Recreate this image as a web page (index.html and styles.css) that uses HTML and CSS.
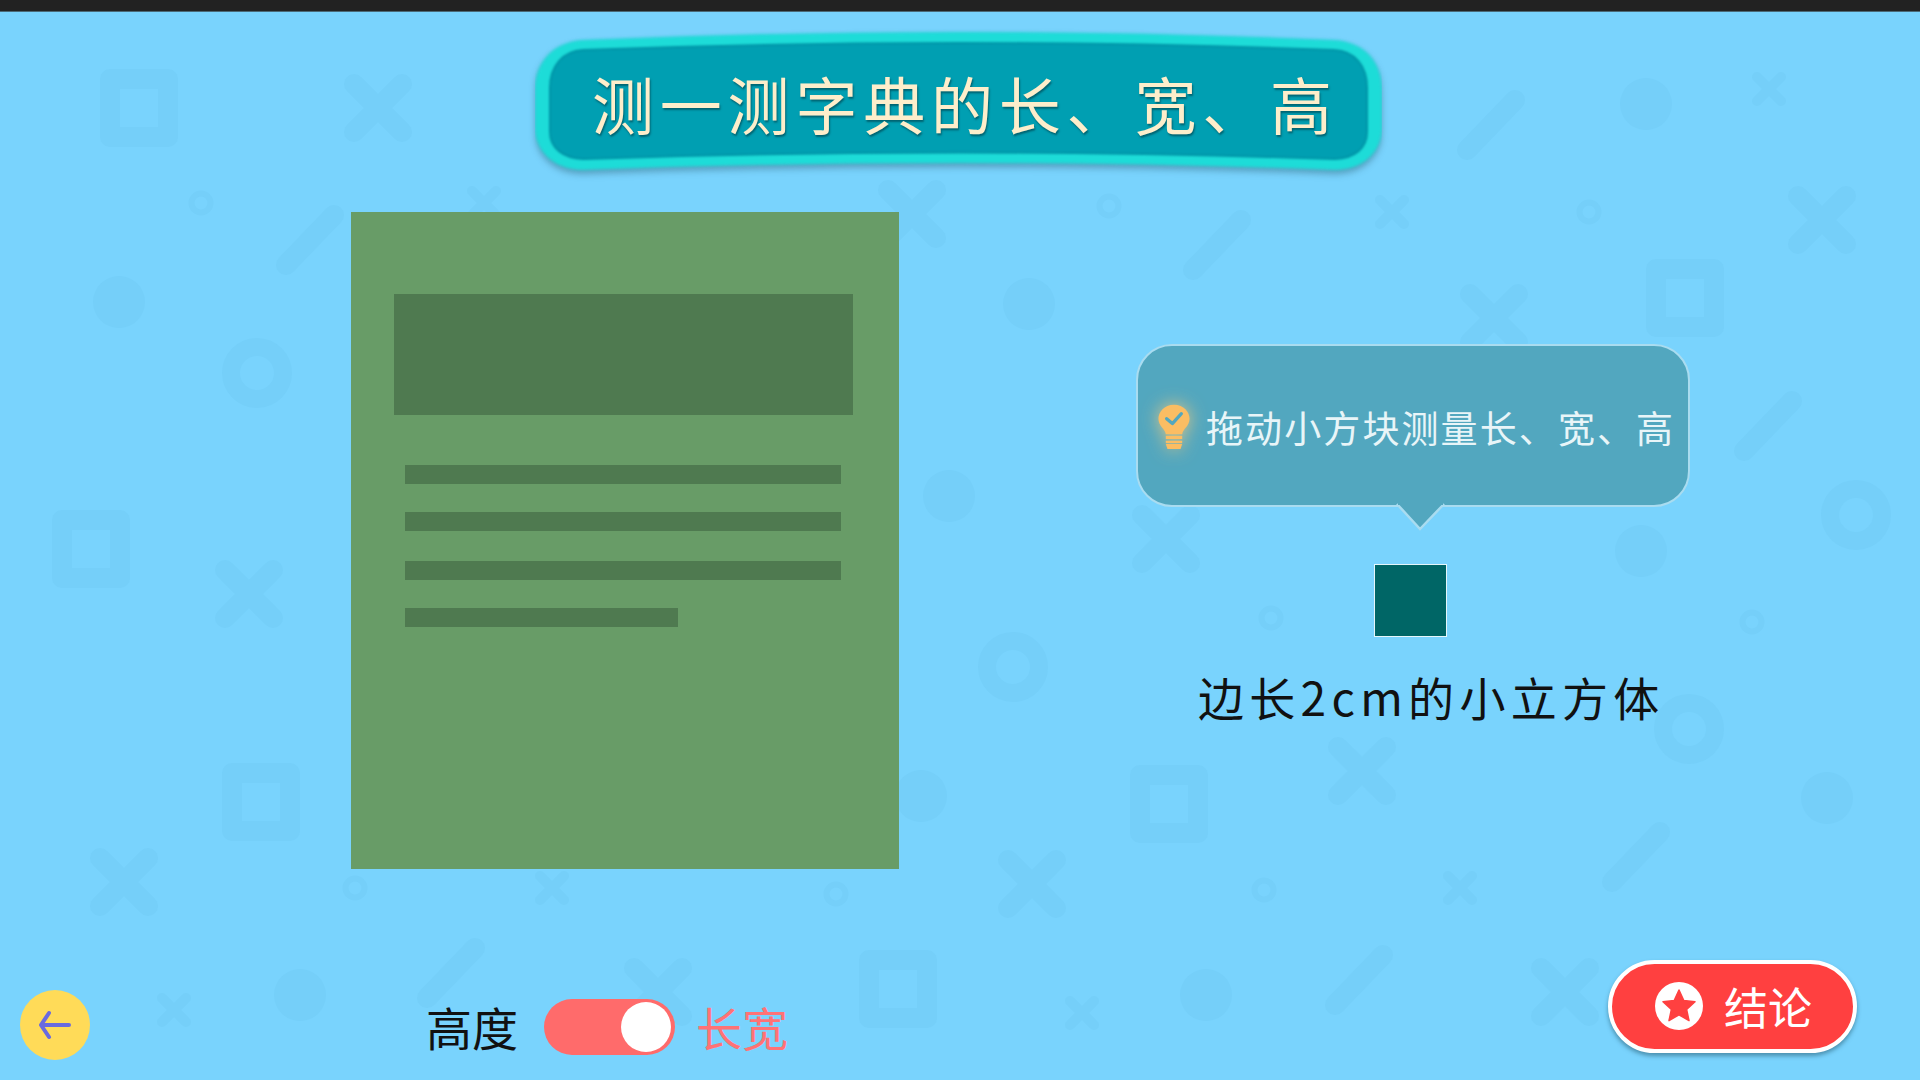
FILE: index.html
```html
<!DOCTYPE html>
<html lang="zh-CN">
<head>
    <meta charset="UTF-8">
    <meta name="viewport" content="width=device-width, initial-scale=1.0">
    <title>测一测字典的长、宽、高</title>
    <link rel="stylesheet" href="styles.css">
</head>
<body>
    <svg class="pattern" width="1920" height="1080" viewBox="0 0 1920 1080" aria-hidden="true">
        <defs>
            <path id="sq" fill-rule="evenodd" d="M-29-39H29A10 10 0 0 1 39-29V29A10 10 0 0 1 29 39H-29A10 10 0 0 1-39 29V-29A10 10 0 0 1-29-39ZM-19-19V19H19V-19Z"/>
            <path id="x" d="M-24-24L24 24M24-24L-24 24" fill="none" stroke-width="20" stroke-linecap="round"/>
            <path id="xs" d="M-12-12L12 12M12-12L-12 12" fill="none" stroke-width="10" stroke-linecap="round"/>
            <path id="sl" d="M24-25L-24 25" fill="none" stroke-width="20" stroke-linecap="round"/>
            <circle id="dot" r="26"/>
            <circle id="rs" r="9.5" fill="none" stroke-width="6"/>
            <circle id="rl" r="26" fill="none" stroke-width="18"/>
        </defs>
        <g class="pattern-shapes">
            <use href="#sq" x="139" y="108"/><use href="#sq" x="1685" y="298"/><use href="#sq" x="91" y="549"/>
            <use href="#sq" x="261" y="802"/><use href="#sq" x="1169" y="804"/><use href="#sq" x="898" y="989"/>
            <use href="#x" x="378" y="108"/><use href="#x" x="1822" y="220"/><use href="#x" x="912" y="214"/>
            <use href="#x" x="1494" y="318"/><use href="#x" x="1166" y="539"/><use href="#x" x="249" y="594"/>
            <use href="#x" x="1362" y="771"/><use href="#x" x="124" y="882"/><use href="#x" x="1032" y="884"/>
            <use href="#x" x="658" y="992"/><use href="#x" x="1565" y="992"/>
            <use href="#xs" x="1769" y="89"/><use href="#xs" x="1392" y="212"/><use href="#xs" x="484" y="203"/>
            <use href="#xs" x="552" y="888"/><use href="#xs" x="1460" y="888"/><use href="#xs" x="174" y="1010"/>
            <use href="#xs" x="1082" y="1013"/>
            <use href="#sl" x="1491" y="125"/><use href="#sl" x="310" y="240"/><use href="#sl" x="1217" y="245"/>
            <use href="#sl" x="1768" y="426"/><use href="#sl" x="1636" y="857"/><use href="#sl" x="451" y="973"/>
            <use href="#sl" x="1359" y="980"/>
            <use href="#dot" x="119" y="302"/><use href="#dot" x="1029" y="304"/><use href="#dot" x="1646" y="104"/>
            <use href="#dot" x="949" y="496"/><use href="#dot" x="1641" y="551"/><use href="#dot" x="921" y="796"/>
            <use href="#dot" x="1827" y="798"/><use href="#dot" x="300" y="995"/><use href="#dot" x="1206" y="995"/>
            <use href="#rs" x="201" y="203"/><use href="#rs" x="1109" y="206"/><use href="#rs" x="1589" y="212"/>
            <use href="#rs" x="1271" y="618"/><use href="#rs" x="1752" y="622"/><use href="#rs" x="355" y="888"/>
            <use href="#rs" x="836" y="894"/><use href="#rs" x="1264" y="890"/>
            <use href="#rl" x="257" y="373"/><use href="#rl" x="1856" y="515"/><use href="#rl" x="1013" y="667"/>
            <use href="#rl" x="1689" y="729"/>
        </g>
    </svg>

    <div class="topbar"></div>

    <header class="header">
        <div class="banner">
            <svg class="banner-bg" width="847" height="150" viewBox="0 0 847 150" aria-hidden="true">
                <path class="banner-rim" d="M48 12Q423-4 799 12C830 14 847 34 847 62V100C847 122 830 142 800 142Q423 128 48 142C18 142 0 122 0 100V62C0 34 18 14 48 12Z"/>
                <path class="banner-face" d="M48 22Q423 8 799 22C820 23 832 38 832 60V104C832 120 820 130 800 131Q423 118 48 131C28 130 15 120 15 104V60C15 38 28 23 48 22Z"/>
            </svg>
            <h1 class="banner-text">测一测字典的长、宽、高</h1>
        </div>
    </header>

    <main class="content">
        <div class="book">
            <div class="book-cover"></div>
            <div class="book-line"></div>
            <div class="book-line book-line-wide-gap"></div>
            <div class="book-line"></div>
            <div class="book-line book-line-short"></div>
        </div>

        <section class="side">
            <div class="bubble">
                <svg class="bulb" width="36" height="46" viewBox="0 0 44 56" aria-hidden="true">
                    <path d="M22 2C10 2 3 11 3 19C3 28 11 31 12 38H32C33 31 41 28 41 19C41 11 34 2 22 2Z" fill="#fbbd63"/>
                    <path d="M13 19L20 25L31 13" fill="none" stroke="#52a7bf" stroke-width="4" stroke-linecap="round" stroke-linejoin="round"/>
                    <rect x="12" y="40" width="20" height="4" fill="#fbbd63"/>
                    <rect x="12" y="46" width="20" height="3" fill="#fbbd63"/>
                    <path d="M12 50H32L30 56H14Z" fill="#fbbd63"/>
                </svg>
                <span class="bubble-text">拖动小方块测量长、宽、高</span>
                <svg class="bubble-tail" width="51" height="28" viewBox="0 0 51 28" aria-hidden="true">
                    <path d="M2 1L25 26L49 1" fill="#52a7bf" stroke="#a9dcf0" stroke-width="2.5"/>
                    <rect x="3" y="0" width="45" height="2" fill="#52a7bf"/>
                </svg>
            </div>
            <div class="cube"></div>
            <p class="cube-label">边长2cm的小立方体</p>
        </section>
    </main>

    <footer class="footer">
        <button class="back" aria-label="返回">
            <svg width="34" height="30" viewBox="0 0 34 30" aria-hidden="true">
                <path d="M31 15H3M11 3L3 15L11 27" fill="none" stroke="#6a6adf" stroke-width="4" stroke-linecap="round" stroke-linejoin="round"/>
            </svg>
        </button>
        <div class="mode">
            <span class="mode-label">高度</span>
            <div class="toggle"><div class="toggle-knob"></div></div>
            <span class="mode-label mode-label-on">长宽</span>
        </div>
        <button class="conclude">
            <svg width="48" height="48" viewBox="0 0 48 48" aria-hidden="true">
                <circle cx="24" cy="24" r="24" fill="#fff"/>
                <path d="M24 8L28.8 18.6L40 19.8L31.6 27.4L34 38.6L24 32.8L14 38.6L16.4 27.4L8 19.8L19.2 18.6Z" fill="#ff4040" stroke="#ff4040" stroke-width="1.5" stroke-linejoin="round"/>
            </svg>
            <span>结论</span>
        </button>
    </footer>
</body>
</html>
```

FILE: styles.css
```css
* {
    box-sizing: border-box;
}
html, body {
    margin: 0;
    height: 100%;
}
body {
    position: relative;
    width: 1920px;
    height: 1080px;
    overflow: hidden;
    background-color: #79d3fd;
    font-family: "Noto Sans CJK SC", "Noto Sans", sans-serif;
    color: #111;
}
.pattern {
    position: absolute;
    top: 0;
    left: 0;
}
.pattern-shapes {
    fill: #75cff9;
    stroke: #75cff9;
    stroke-width: 0;
}
.topbar {
    position: relative;
    height: 12px;
    background-color: #222;
    border-bottom: 1px solid #4b6a78;
}

/* title */
.header {
    position: relative;
    padding: 16px 0 0 535px;
}
.banner {
    position: relative;
    display: flex;
    align-items: center;
    width: 847px;
    height: 142px;
    padding: 8px 0 0 57px;
}
.banner-bg {
    position: absolute;
    top: 0;
    left: 0;
    filter: drop-shadow(0 4px 3px rgba(40, 90, 110, 0.45));
}
.banner-rim {
    fill: #1ddcd8;
    filter: blur(1.5px);
}
.banner-face {
    fill: #009fb2;
    stroke: #0094a7;
    stroke-width: 2;
    filter: blur(0.8px);
}
.banner-text {
    position: relative;
    margin: 0;
    font-size: 62px;
    font-weight: 400;
    line-height: 1;
    letter-spacing: 5.8px;
    white-space: nowrap;
    color: #fdeecb;
    text-shadow: 1px 2px 2px rgba(0, 60, 70, 0.6);
}

/* book and helper */
.content {
    position: relative;
    display: flex;
    margin-top: 42px;
    padding-left: 351px;
}
.book {
    width: 548px;
    height: 657px;
    padding: 82px 46px 0 43px;
    background-color: #689c67;
}
.book-cover {
    height: 121px;
    margin-bottom: 50px;
    background-color: #4f7a50;
}
.book-line {
    width: 436px;
    height: 19px;
    margin: 0 0 28px 11px;
    background-color: #4f7a50;
}
.book-line-wide-gap {
    margin-bottom: 30px;
}
.book-line-short {
    width: 273px;
}
.side {
    width: 554px;
    margin-left: 237px;
    padding-top: 132px;
}
.bubble {
    position: relative;
    display: flex;
    align-items: center;
    gap: 14px;
    height: 163px;
    padding-left: 18px;
    background-color: #52a7bf;
    border: 2.5px solid #a9dcf0;
    border-radius: 36px;
}
.bulb {
    flex: none;
    filter: drop-shadow(0 0 9px rgba(255, 205, 120, 0.85));
}
.bubble-text {
    margin-top: 4px;
    font-size: 37px;
    line-height: 1;
    letter-spacing: 2.1px;
    white-space: nowrap;
    color: #e8f5f8;
}
.bubble-tail {
    position: absolute;
    left: 257px;
    bottom: -26px;
}
.cube {
    width: 73px;
    height: 73px;
    margin: 57px 0 0 238px;
    background-color: #006666;
    border: 1.5px solid #e6f6fb;
}
.cube-label {
    margin: 32px 0 0 62px;
    font-size: 46px;
    line-height: 1.2;
    letter-spacing: 5.3px;
    white-space: nowrap;
}

/* bottom controls */
.footer {
    position: absolute;
    top: 960px;
    left: 0;
    right: 63px;
    display: flex;
    align-items: flex-start;
    padding-left: 20px;
}
.back {
    display: flex;
    align-items: center;
    justify-content: center;
    width: 70px;
    height: 70px;
    margin-top: 30px;
    padding: 0;
    border: none;
    border-radius: 50%;
    background-color: #ffdb58;
}
.mode {
    display: flex;
    align-items: center;
    height: 56px;
    margin: 38px 0 0 336px;
}
.mode-label {
    font-size: 46px;
    line-height: 1;
}
.mode-label-on {
    margin-left: 21px;
    color: #ff7275;
}
.toggle {
    display: flex;
    justify-content: flex-end;
    align-items: center;
    width: 131px;
    height: 56px;
    margin: 1px 0 0 26px;
    padding-right: 4px;
    border-radius: 28px;
    background-color: #ff6b6b;
}
.toggle-knob {
    width: 50px;
    height: 50px;
    border-radius: 50%;
    background-color: #fff;
}
.conclude {
    display: flex;
    align-items: center;
    gap: 21px;
    width: 249px;
    height: 93px;
    margin-left: auto;
    padding: 0 0 2px 43px;
    border: 4px solid #fff;
    border-radius: 47px;
    background-color: #ff4040;
    box-shadow: 0 3px 4px rgba(30, 80, 100, 0.5);
    font-family: inherit;
    font-size: 44px;
    color: #fff;
}
```
